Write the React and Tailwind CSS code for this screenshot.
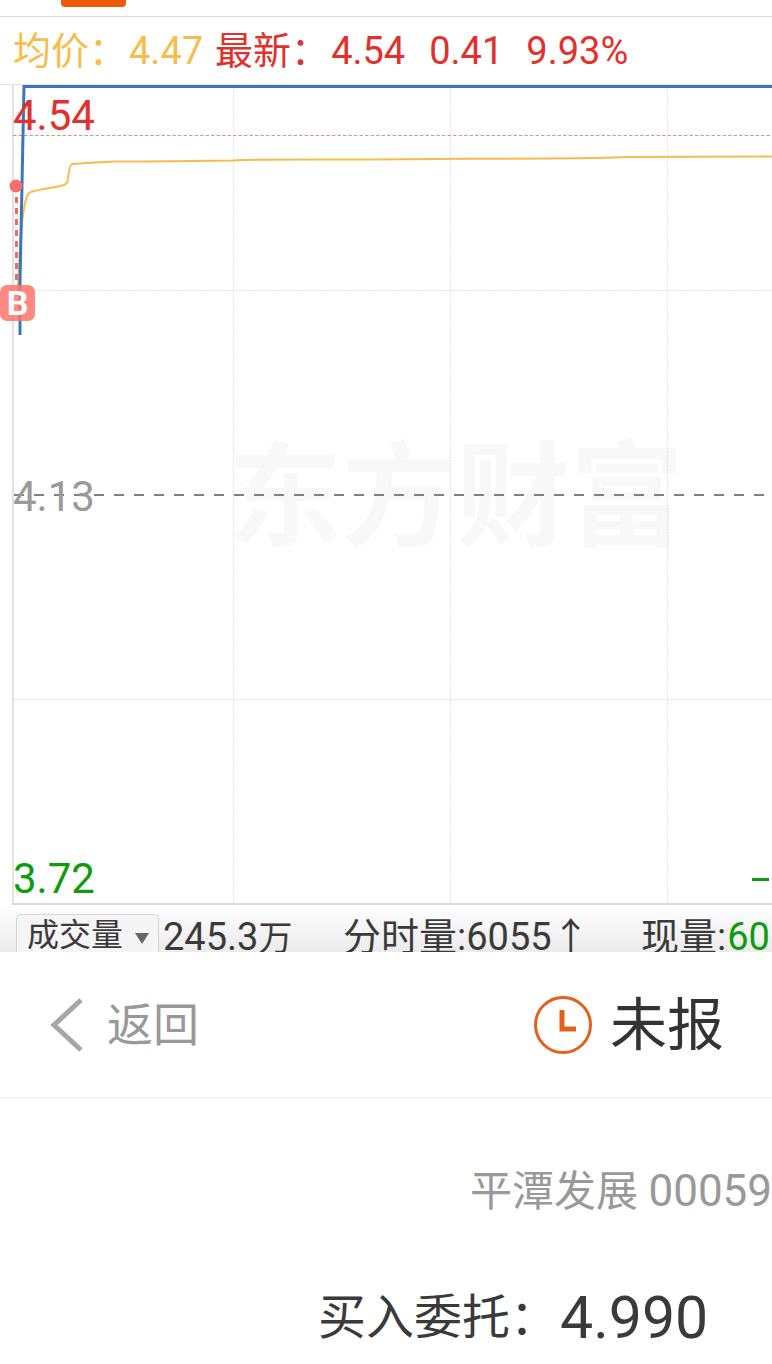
const cjk = { fontFamily: '"Roboto","Noto Sans CJK SC",sans-serif' };

function Chart() {
  return (
    <svg className="absolute left-0 top-0" width="772" height="820" viewBox="0 85 772 820" fill="none">
      <g stroke="#dcdcdc" strokeWidth="1" strokeDasharray="1.5 1.5">
        <path d="M233.5 85V903M450.5 85V903M667.5 85V903" />
        <path d="M14 290.5H772M14 699.5H772" />
      </g>
      <path d="M13 135.5H772" stroke="#e0966a" strokeWidth="1" strokeDasharray="3.5 2" />
      <path d="M14 495H772" stroke="#808080" strokeWidth="2" strokeDasharray="10 10" />
      <path d="M18 290C20 230 23 203 28 194C31 190 48 189 60 186C66 185 68 183 68 178C69 170 70 164 72 164C85 163 100 162 115 161.500H146C180 161 200 161 233 160.500C236 159 300 159.500 372 159.500C410 159 440 159 470 158.800C540 158.500 600 158.500 625 157C680 156.500 730 156.500 772 156.500" stroke="#f6bd4b" strokeWidth="2" />
      <path d="M16.500 186V285" stroke="#ee6b62" strokeWidth="3" strokeDasharray="6 5" />
      <path d="M20 335L20 282L24 86.500H772" stroke="#3a75bf" strokeWidth="3" />
      <circle cx="16" cy="186" r="6.500" fill="#f4716a" />
    </svg>
  );
}

export default function App() {
  return (
    <div className="w-[772px] h-[1364px] overflow-hidden bg-white flex flex-col" style={cjk}>
      <div className="h-[17px] shrink-0 border-b border-[#dcdcdc] pl-[61px]">
        <div className="w-[65px] h-[7px] bg-[#ec5a0c] rounded-b-[4px]" />
      </div>
      <div className="h-[68px] shrink-0 border-b border-[#e4e4e4] flex items-center pl-[13px] text-[38px] leading-none text-[#e2302c] whitespace-nowrap">
        <span className="text-[#f6bd4b]">均价：</span>
        <span className="text-[#f6bd4b] ml-[2px]">4.47</span>
        <span className="ml-[12px]">最新：</span>
        <span className="ml-[2px]">4.54</span>
        <span className="ml-[24px]">0.41</span>
        <span className="ml-[23px]">9.93%</span>
      </div>
      <div className="relative h-[820px] shrink-0">
        <div className="absolute left-[12px] top-0 bottom-0 w-[2px] bg-[#e2e2e2]" />
        <div className="absolute left-[12px] right-0 bottom-0 h-[2px] bg-[#dadada]" />
        <div className="absolute left-[228px] top-[356px] text-[114px] leading-none font-bold text-[#f8f8f8] whitespace-nowrap">东方财富</div>
        <Chart />
        <div className="absolute left-[13px] top-[10px] text-[42px] leading-none text-[#e2302c]">4.54</div>
        <div className="absolute left-[13px] top-[391px] text-[42px] leading-none text-[#9a9a9a]">4.13</div>
        <div className="absolute left-[13px] top-[773px] text-[42px] leading-none text-[#0c9c0c]">3.72</div>
        <div className="absolute left-[752px] top-[793px] w-[17px] h-[3px] bg-[#0c9c0c]" />
        <div className="absolute left-0 top-[200px] w-[35px] h-[36px] rounded-[7px] bg-[#ff7468]/85 flex items-center justify-center text-[34px] font-bold leading-none text-white">B</div>
      </div>
      <div className="h-[47px] shrink-0 overflow-hidden bg-gradient-to-b from-white to-[#ebebeb] flex items-start pl-[16px] pt-[9px] text-[#3a3a3a] text-[38px] leading-[42px] whitespace-nowrap">
        <div className="w-[143px] h-[60px] shrink-0 border border-[#d6d6d6] rounded-[5px] bg-[#f5f5f5] flex items-start pl-[10px] gap-[12px]">
          <span className="text-[32px] leading-[40px]">成交量</span>
          <div className="mt-[18px] w-0 h-0 border-l-[7px] border-r-[7px] border-t-[11px] border-l-transparent border-r-transparent border-t-[#666666]" />
        </div>
        <div className="ml-[4px] w-[180px] shrink-0 mt-[2px]">245.3<span className="text-[34px]">万</span></div>
        <div className="w-[298px] shrink-0 mt-[2px]">分时量:6055↑</div>
        <div className="mt-[2px]">现量:<span className="text-[#0c9c0c] ml-[1px]">60</span></div>
      </div>
      <div className="flex-1 bg-white flex flex-col">
        <div className="h-[146px] shrink-0 border-b border-[#ececec] flex items-center justify-between pl-[50px] pr-[48px]">
          <div className="flex items-center gap-[23px]">
            <svg width="34" height="56" viewBox="0 0 34 56" fill="none">
              <path d="M31 3L4 28L31 53" stroke="#a6a6a6" strokeWidth="5" />
            </svg>
            <span className="text-[46px] leading-none text-[#999999]">返回</span>
          </div>
          <div className="flex items-center gap-[17px]">
            <svg width="60" height="60" viewBox="0 0 60 60" fill="none">
              <circle cx="30" cy="30" r="27.500" stroke="#e2611d" strokeWidth="3" />
              <path d="M29 15V34H43" stroke="#e2611d" strokeWidth="5" />
            </svg>
            <span className="text-[57px] leading-none text-[#333333] mt-[2px]">未报</span>
          </div>
        </div>
        <div className="pt-[71px] pl-[470px] text-[42px] leading-none text-[#999999] whitespace-nowrap">平潭发展 <span className="text-[44px]">000592</span></div>
        <div className="mt-[75px] pl-[318px] flex items-center text-[#3a3a3a] whitespace-nowrap">
          <span className="text-[48px] leading-none">买入委托：</span>
          <span className="text-[59px] leading-none ml-[2px]">4.990</span>
        </div>
      </div>
    </div>
  );
}
